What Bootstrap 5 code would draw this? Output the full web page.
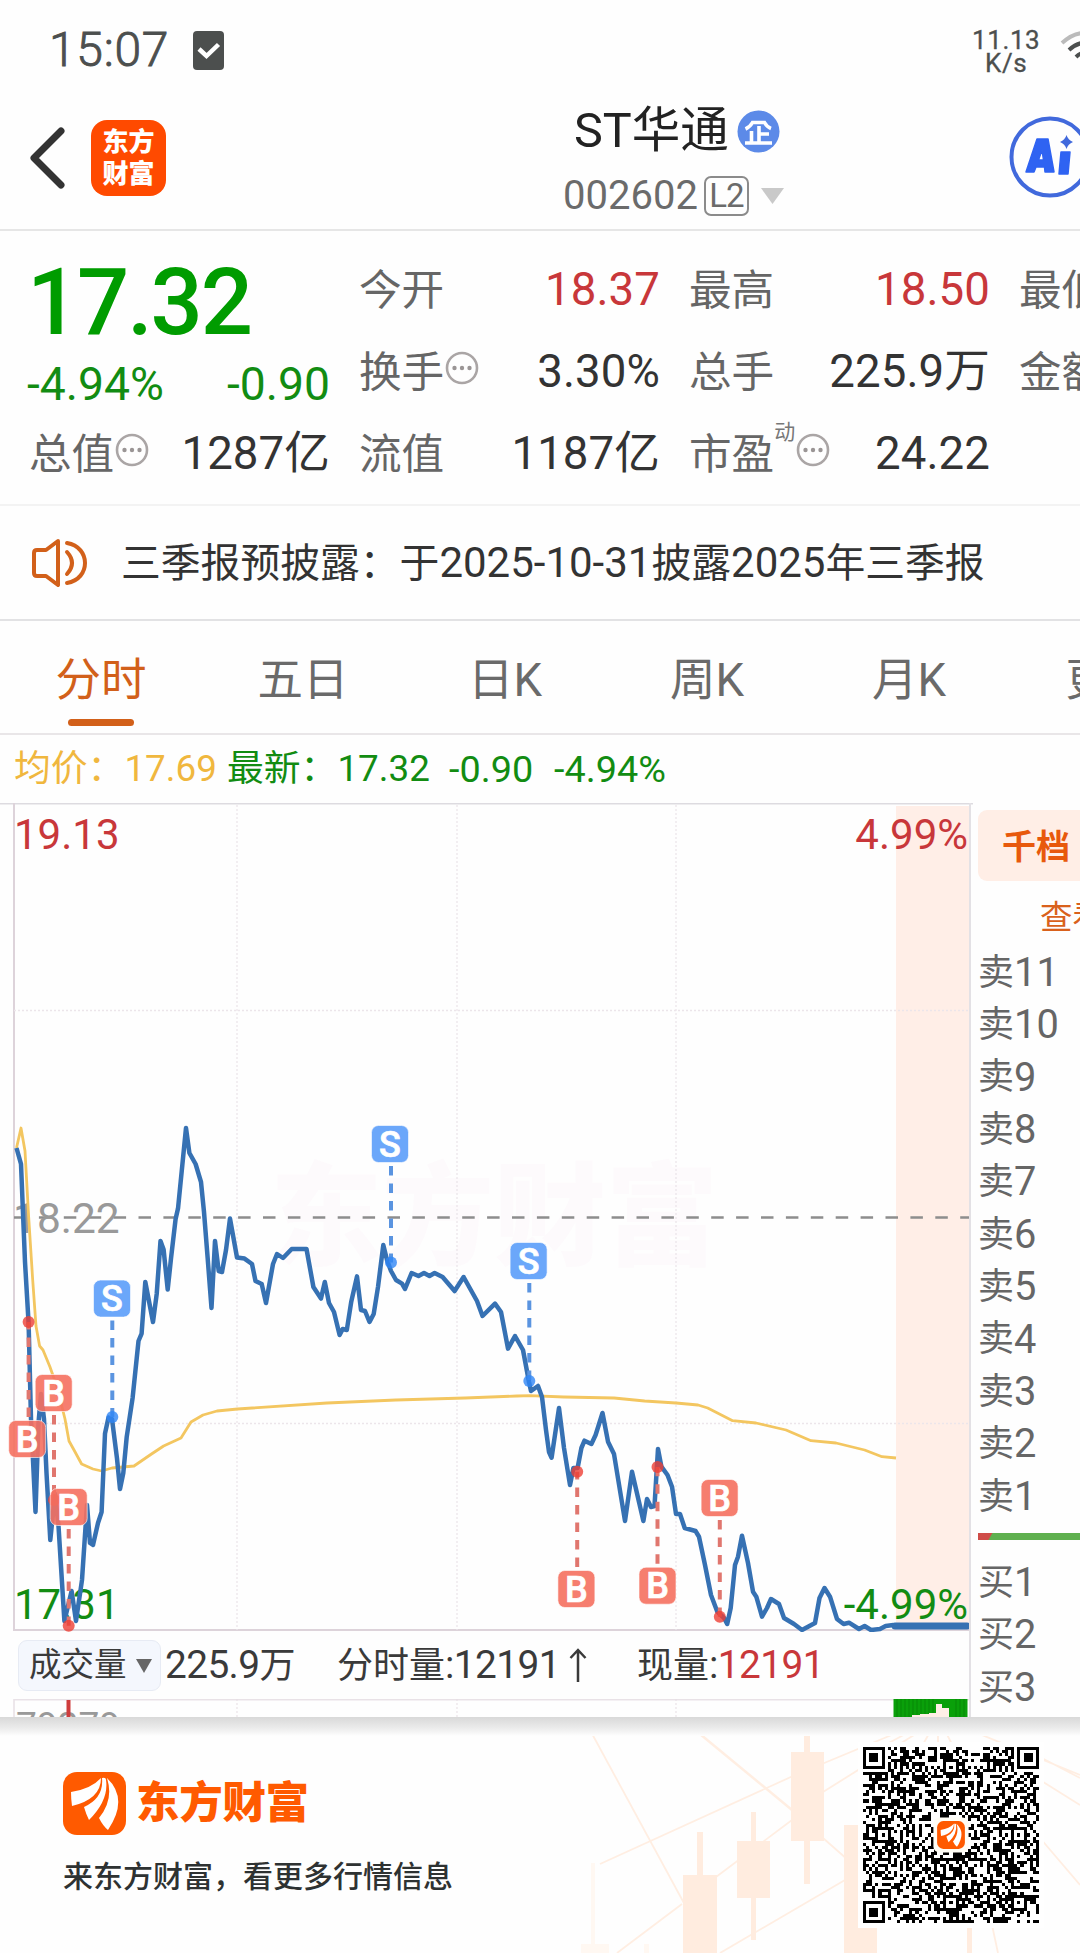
<!DOCTYPE html>
<html lang="zh-CN">
<head>
<meta charset="utf-8">
<meta name="viewport" content="width=device-width, initial-scale=1">
<title>ST华通 002602</title>
<link rel="stylesheet" href="https://cdn.jsdelivr.net/npm/bootstrap@5.3.0/dist/css/bootstrap.min.css">
<style>
body{width:1080px;height:1953px;overflow:hidden;background:#fefefe;color:#333;font-family:Roboto,"Noto Sans CJK SC",sans-serif;line-height:1;white-space:nowrap}
svg{display:block;flex:none}
.statusbar{height:100px;padding:0 0 20px 49px;color:#4c4f4e}
.clock{font-size:48px;font-weight:300;-webkit-text-stroke:.9px #4c4f4e;letter-spacing:.7px;width:121px;flex:none;margin-top:19px}
.netspeed{font-size:26px;line-height:23.5px;text-align:center;letter-spacing:.6px;color:#4c4f4e;-webkit-text-stroke:.3px #4c4f4e}
.titlebar{height:131px;border-bottom:2px solid #e6e6e6;padding-left:28px}
.applogo{width:75px;flex:none;height:76px;border-radius:16px;background:#ff4a00;color:#fff;font-size:26px;font-weight:900;line-height:32px;margin-left:25px;margin-top:-14px}
.titlecol{margin-left:397px;width:240px;flex:none}
.stockname{font-size:48.5px;color:#222;height:60px}
.codeline{font-size:40px;color:#6b6b6b;height:44px;margin-top:12px}
.l2{border:2px solid #8b8b8b;border-radius:7px;width:45px;height:40px;font-size:33px;margin-left:6px;letter-spacing:-1px}
.quotes{height:275px;border-bottom:2px solid #f3f3f3;padding:18px 30px 0 29px;gap:29px}
.qcol{width:301px;flex:none}
.qrow{height:82px;font-size:45.6px;letter-spacing:.1px}
.qlabel{font-size:42.6px;color:#666;letter-spacing:0}
.up{color:#c8373a}.down{color:#128c12}
.bigprice{font-size:92px;font-weight:500;color:#009c00;height:104px;line-height:108px;letter-spacing:-2.2px;margin-left:-2px}
.chg{height:60px;font-size:46.3px;margin-left:-2px;padding-top:3px}
.tiny{font-size:21px;color:#777;align-self:flex-start;margin-top:9px}
.notice{height:115px;border-bottom:2px solid #e2e2e4;padding-left:31px;font-size:39.8px;color:#333}
.notice b{font-weight:400;font-size:42px}
.tabrow{height:114px;border-bottom:2px solid #e9e6e8}
.tabrow .tabitem{width:202px;flex:none;font-size:45.5px;color:#6a6a6a;padding-top:37px;height:112px}
.tabitem.on{color:#d2601a}
.tabitem.on::after{content:"";width:66px;height:7px;border-radius:4px;background:#d2601a;margin-top:15px}
.legendrow{height:68px;padding:1px 0 0 14px;font-size:36.8px}
.legendrow .chgnum{font-size:37.8px}
.avg{color:#f0b73e}
.market{height:914px}
.pane{width:973px;flex:none}
.book{border-left:2px solid #e3e1e5;margin-left:-4px;padding:7px 0 0 7px;color:#666;font-size:36px;width:111px;flex:none;overflow:hidden}
.book .lv{height:52.4px}.lv i{font-style:normal;font-size:39.8px}
.depthbtn{width:110px;height:71px;border-radius:9px 0 0 9px;background:#ffeee6;color:#e8590c;font-weight:700;font-size:34px;padding:2px 0 0 24px}
.viewmore{font-size:32.5px;color:#d9611c;padding:21px 0 12px 62px}
.bidbar{height:7px;margin:10px 0 17px;background:linear-gradient(120deg,#cf4c48 12px,#5fb04f 13px)}
.volrow{height:67px;padding-left:18px;font-size:38.8px;letter-spacing:-.6px;color:#3a3a3a}
.volbtn{width:143px;height:51px;border-radius:9px;background:#f4f7fd;border:1px solid #e7ebf4;padding-left:10px;font-size:32.5px;letter-spacing:0}
.volrow .cj{font-size:36px;letter-spacing:0}
.promo{height:236px;position:relative;background:#fefefe}
.promo .art{position:absolute;left:0;top:0}
.shade{position:absolute;left:0;top:0;width:100%;height:19px;background:linear-gradient(#d8d8d8,#ececec 60%,#fefefe)}
.promobody{position:relative;height:236px;padding-left:63px}
.brand{font-size:43.5px;font-weight:900;color:#ff5a00;margin-left:10px;letter-spacing:-.3px}
.tagline{font-size:30px;font-weight:500;color:#2e3232;margin-top:27px}
.qrbox{width:186px;height:186px;background:#fff;margin:25px 36px 0 0;padding:5px;align-self:flex-start}
text{font-family:Roboto,"Noto Sans CJK SC",sans-serif}
</style>
</head>
<body>
<svg width="0" height="0" class="position-absolute">
<defs>
<symbol id="more" viewBox="0 0 34 34"><circle cx="17" cy="17" r="15" fill="none" stroke="#aaa5a5" stroke-width="2.6"/><g fill="#9a9595"><circle cx="9.5" cy="17" r="2.2"/><circle cx="17" cy="17" r="2.2"/><circle cx="24.5" cy="17" r="2.2"/></g></symbol>
<symbol id="fan" viewBox="0 0 63 63"><rect width="63" height="63" rx="14" fill="#ff5a00"/><g fill="#fff"><path d="M8 20Q28 17 38 6Q38 27 9 34Q8 27 8 20Z"/><path d="M39 6Q43 5 43 8Q46 28 26 48Q23 42 21 35Q41 26 39 6Z"/><path d="M44 6Q66 27 45 58Q40 54 36 46Q51 28 44 6Z"/></g></symbol>
</defs>
</svg>

<div class="statusbar d-flex align-items-center overflow-hidden">
  <div class="clock">15:07</div>
  <svg width="32" height="39" viewBox="0 0 32 39" style="margin-left:23px;margin-top:20px"><rect width="31" height="39" rx="4" fill="#4c4f4e"/><path d="M6 18L13.500 25L25.500 13.500" fill="none" stroke="#fff" stroke-width="4.500"/></svg>
  <div class="netspeed" style="margin-left:747px;margin-top:24px">11.13<br>K/s</div>
  <svg width="50" height="40" viewBox="0 0 50 40" style="margin-left:19px;margin-top:20px" fill="none" stroke-width="4"><path d="M3 13Q25 -7 47 13" stroke="#bbb"/><path d="M10 20Q25 6 40 20M17 27Q25 19 33 27" stroke="#4c4f4e"/></svg>
</div>

<div class="titlebar d-flex align-items-center overflow-hidden">
  <svg width="38" height="66" viewBox="0 0 38 66" style="margin-top:-14px"><path d="M33 6L6 33L33 60" fill="none" stroke="#333" stroke-width="7" stroke-linecap="round" stroke-linejoin="round"/></svg>
  <div class="applogo d-flex flex-column align-items-center justify-content-center"><span>东方</span><span>财富</span></div>
  <div class="titlecol" style="margin-top:-10px">
    <div class="stockname d-flex align-items-center" style="padding-left:11px">ST华通
      <svg width="43" height="43" viewBox="0 0 43 43" style="margin-left:8px"><circle cx="21.500" cy="21.500" r="21" fill="#5c8ae8"/><path d="M8.500 19Q13 17 15.500 12.500H27.500Q30 17 34 18.500M22 16V32M14.500 21V32M8 33H35M22 24H32" fill="none" stroke="#fff" stroke-width="3.600"/></svg>
    </div>
    <div class="codeline d-flex align-items-center"><span>002602</span><span class="l2 d-flex align-items-center justify-content-center">L2</span>
      <svg width="23" height="16" viewBox="0 0 23 16" style="margin-left:12px"><path d="M0 0H23L11.500 16Z" fill="#c9c9c9"/></svg></div>
  </div>
  <svg width="82" height="82" viewBox="0 0 82 82" style="margin-left:206px;margin-top:-16px"><circle cx="41" cy="41" r="38.500" fill="none" stroke="#4169dc" stroke-width="4"/><path fill-rule="evenodd" fill="#2f63f2" stroke="#2f63f2" stroke-width="1.500" stroke-linejoin="round" d="M17 56L28 23H39L45 56H36L35.500 51H27L25 56ZM29.500 44H34.500L33 34ZM52 36H61L59 58H50Z"/><path fill="#4169dc" d="M57.500 19Q59 24 64 26Q59 28 57.500 33Q56 28 51 26Q56 24 57.500 19Z"/></svg>
</div>

<div class="quotes d-flex overflow-hidden">
  <div class="qcol">
    <div class="bigprice">17.32</div>
    <div class="chg down d-flex justify-content-between align-items-center"><span>-4.94%</span><span>-0.90</span></div>
    <div class="qrow d-flex align-items-center"><span class="qlabel">总值</span><svg width="34" height="34" style="margin:-8px 0 0 1px"><use href="#more"/></svg><span class="ms-auto">1287亿</span></div>
  </div>
  <div class="qcol">
    <div class="qrow d-flex align-items-center"><span class="qlabel">今开</span><span class="ms-auto up">18.37</span></div>
    <div class="qrow d-flex align-items-center"><span class="qlabel">换手</span><svg width="34" height="34" style="margin:-8px 0 0 1px"><use href="#more"/></svg><span class="ms-auto">3.30%</span></div>
    <div class="qrow d-flex align-items-center"><span class="qlabel">流值</span><span class="ms-auto">1187亿</span></div>
  </div>
  <div class="qcol">
    <div class="qrow d-flex align-items-center"><span class="qlabel">最高</span><span class="ms-auto up">18.50</span></div>
    <div class="qrow d-flex align-items-center"><span class="qlabel">总手</span><span class="ms-auto">225.9万</span></div>
    <div class="qrow d-flex align-items-center"><span class="qlabel">市盈</span><span class="tiny">动</span><svg width="34" height="34" style="margin:-8px 0 0 1px"><use href="#more"/></svg><span class="ms-auto">24.22</span></div>
  </div>
  <div class="qcol">
    <div class="qrow d-flex align-items-center"><span class="qlabel">最低</span></div>
    <div class="qrow d-flex align-items-center"><span class="qlabel">金额</span></div>
  </div>
</div>

<div class="notice d-flex align-items-center">
  <svg width="60" height="52" viewBox="0 0 60 52" fill="none" stroke="#d2601a" stroke-width="4" stroke-linejoin="round" stroke-linecap="round"><path d="M27 4L15 13H6Q3 13 3 16V36Q3 39 6 39H15L27 48Z"/><path d="M36 15Q46 26 36 37M36 6C60 10 60 42 36 46"/></svg>
  <span style="margin-left:30px;padding-top:1px">三季报预披露：于<b>2025-10-31</b>披露<b>2025</b>年三季报</span>
</div>

<div class="tabrow d-flex overflow-hidden">
  <div class="tabitem on d-flex flex-column align-items-center">分时</div>
  <div class="tabitem text-center">五日</div>
  <div class="tabitem text-center">日K</div>
  <div class="tabitem text-center">周K</div>
  <div class="tabitem text-center">月K</div>
  <div class="tabitem text-center">更多</div>
</div>

<div class="legendrow d-flex align-items-center">
  <span class="avg" style="width:213px">均价：17.69</span><span class="down" style="width:222px">最新：17.32</span><span class="down chgnum" style="width:105px">-0.90</span><span class="down chgnum">-4.94%</span>
</div>

<div class="market d-flex overflow-hidden">
  <div class="pane">
    <svg width="973" height="829" viewBox="0 803 973 829" id="chart">
      <rect x="896" y="806" width="73" height="823" fill="#ffeee7"/>
      <text x="270" y="1257" font-size="112" font-weight="900" fill="#fdfafc">东方财富</text>
      <path d="M0 803.500H973" stroke="#dddbe0" stroke-width="2"/>
      <path d="M14 803V1630H971" fill="none" stroke="#ddd3da" stroke-width="2"/>
      <path d="M237 805V1630M457 805V1630M676 805V1630M14 1010.500H969M14 1423.500H969" stroke="#ece5ea" stroke-width="1.300" stroke-dasharray="2 2"/>
      <path d="M14 1217.500H969" stroke="#8d8d8d" stroke-width="2.300" stroke-dasharray="12.500 12.400"/>
      <text x="13" y="1233" font-size="42.500" fill="#999">18.22</text>
      <text x="14" y="849" font-size="42" fill="#c8373a">19.13</text>
      <text x="968" y="849" font-size="42" fill="#c8373a" text-anchor="end">4.99%</text>
      <text x="14" y="1619" font-size="42" fill="#128c12">17.31</text>
      <polyline fill="none" stroke="#f3c660" stroke-width="2.800" stroke-linejoin="round" points="16.500,1148 21,1128 25,1151 28.600,1216 32.700,1280 36,1326 39.600,1346 43,1350 50,1367 57,1387 65,1419 69,1441 74,1450 81.600,1464 93,1469 101.600,1471 112,1468 134,1466 151.500,1454 163.600,1446 181,1438 191,1422 203,1415 217,1411 237.600,1409 327,1403 396,1400 465,1398 517,1396 530,1395.700 564,1397 614,1398 644.600,1401 676,1403 698,1405 707.700,1408 732.600,1420.700 756,1423 786,1430 811,1440.700 836,1443 864.600,1450 882,1456.700 896,1458"/>
      <polyline fill="none" stroke="#3671b3" stroke-width="4.500" stroke-linejoin="round" points="16.500,1148 21,1164 25,1262 28.600,1323 31,1419 35.500,1512 38.500,1423 41,1394 44,1419 46.500,1473 50.300,1540 55,1494 58.500,1526 64.400,1621 71.600,1591 76,1621 82,1580 87,1505 90,1543 93,1545 98,1523 101.600,1512 105,1433.500 108.500,1417.500 112,1419 117,1458.500 120,1489 123.300,1473 126.700,1437 132.600,1398 138.500,1341 141.600,1333.600 145.300,1282 153,1322 156.700,1294 160.500,1241 163.600,1249.600 167.700,1289.600 171,1258.600 175.600,1219 178,1208.600 186,1128 189.400,1153 195.600,1164 201,1182 204,1212 207.700,1258.600 211.500,1308 215,1241 218.700,1271 222,1272 226,1250 230,1218.600 237,1257.500 244.500,1258.600 252,1264 255.500,1281 261.700,1284 266,1303 273,1264 277,1254 283,1258 291.700,1249 306.500,1249 313.400,1287 321,1298.600 324.800,1282 329,1303 334,1312 339.600,1335 342.700,1329 346.800,1330 351.300,1301.400 357,1276.400 361,1310 365,1311 369.500,1322 373.700,1314 378,1287 383.300,1245 387,1260 391,1271 396,1280 402,1283.600 405,1289 411.600,1273 418.500,1276 424,1273 429.500,1276 434.600,1273 442.600,1277 454.600,1291 463.600,1277 477,1301 482.500,1316 495,1303.600 501,1312 508,1348.600 515,1336 523,1350 526,1366 529,1382 531,1391 538,1386 542,1397 546,1430 549,1452 551.600,1457.700 559,1408 564,1448 570,1485 573.400,1468 577.600,1468 581.400,1448 584.500,1440.700 591.400,1444 595.600,1435 602.500,1413 608,1441.700 614,1454 625,1521 632,1471.700 643.400,1521 647,1499 651,1507 654.500,1506 658,1449 661.400,1466.700 667.500,1475 672,1486.700 676,1514 680,1514 684.700,1528 695.500,1531 699,1536.700 705,1565 711,1595 717.300,1611.700 724,1618 727.200,1624 730.700,1608 735,1565 738,1556.700 742,1535.700 748,1563 753,1591.700 756.300,1596.700 762,1616.700 767,1608 771,1599 779,1604 784,1618 794,1624 802,1630 815,1623 819.500,1598 824.500,1588 830,1596.700 837,1619 843.600,1624 849,1622.700 859,1629 864.600,1626 871,1630 880,1629 885.700,1626 893.400,1625"/>
      <path d="M895 1626H967" stroke="#3671b3" stroke-width="7" stroke-linecap="round"/>
      <text x="968" y="1619" font-size="42" fill="#128c12" text-anchor="end">-4.99%</text>
      <g id="marks"></g>
    </svg>
    <div class="volrow d-flex align-items-center">
      <span class="volbtn d-flex align-items-center">成交量<svg width="16" height="14" viewBox="0 0 16 14" style="margin-left:9px"><path d="M0 0H16L8 14Z" fill="#666"/></svg></span>
      <span style="margin-left:4px;width:172px">225.9<span class="cj">万</span></span>
      <span style="width:300px"><span class="cj">分时量</span>:12191<svg class="d-inline-block" width="18" height="36" viewBox="0 0 18 36" style="margin:-6px 0 0 9px"><path d="M9 35V3M1.500 11L9 3L16.500 11" fill="none" stroke="#3a3a3a" stroke-width="2.500"/></svg></span>
      <span><span class="cj">现量</span>:<span class="up">12191</span></span>
    </div>
    <svg width="973" height="18" viewBox="0 0 973 18">
      <path d="M14 18V.8H971" fill="none" stroke="#e9e2e7" stroke-width="1.600"/>
      <path d="M237 0V18M457 0V18M676 0V18" stroke="#e6dde3" stroke-dasharray="2 2"/>
      <text x="16" y="39" font-size="37" fill="#999">79279</text>
      <path d="M68.500 1V18" stroke="#cf3c3c" stroke-width="4"/>
      <rect x="893.500" y="0" width="74" height="18" fill="#0aa00a"/>
      <path d="M897 0V18M901 0V18M905 0V18M909 0V18M913 0V18M917 0V18M921 0V18M925 0V18M929 0V18M933 0V18M956 0V18M960 0V18M964 0V18" stroke="#078807" stroke-width="1"/>
      <path d="M912 18V16H920V15H929V14H936V5H942V9H949V18Z" fill="#ffeee7"/>
    </svg>
  </div>
  <div class="book">
    <div class="depthbtn d-flex align-items-center">千档</div>
    <div class="viewmore">查看</div>
    <div id="asks"></div>
    <div class="bidbar"></div>
    <div id="bids"></div>
  </div>
</div>

<div class="promo">
  <svg class="art" width="1080" height="236" viewBox="0 1717 1080 236">
    <g stroke="#ffeee2" stroke-width="1.800" fill="none"><path d="M683 1720L792 1810" stroke-width="2.500"/><path d="M590 1730L685 1905M600 1864L793 1776L935 1717M823 1792L938 1720M716 1877L792 1820M617 1953L682 1904M720 1953L845 1880M823 1838L848 1860M937 1717L885 1745M938 1717L920 1750M938 1717V1750M938 1717L955 1750M938 1717L1080 1775M1038 1756L1080 1778M1040 1780L1080 1805M1040 1838L1080 1885M992 1925L998 1953"/></g>
    <g fill="#ffecdf"><rect x="683" y="1875" width="34" height="78"/><rect x="697" y="1832" width="6" height="43"/><rect x="737" y="1841" width="33" height="57"/><rect x="751" y="1812" width="5" height="128"/><rect x="791" y="1752" width="33" height="89"/><rect x="804" y="1728" width="6" height="156"/><rect x="844" y="1825" width="33" height="128"/><rect x="967" y="1925" width="5" height="28"/></g>
    <g fill="#fff8f2"><rect x="591" y="1863" width="4" height="90"/><rect x="581" y="1944" width="28" height="9"/><rect x="644" y="1944" width="5" height="9"/></g>
  </svg>
  <div class="shade"></div>
  <div class="promobody d-flex justify-content-between">
    <div style="padding-top:55px">
      <div class="d-flex align-items-center"><svg width="63" height="63"><use href="#fan"/></svg><span class="brand">东方财富</span></div>
      <div class="tagline">来东方财富，看更多行情信息</div>
    </div>
    <div class="qrbox"><svg id="qr" width="176" height="176" viewBox="0 0 57 57"></svg></div>
  </div>
</div>

<script>
// Order book levels
const level = (side, n) => `<div class="lv d-flex align-items-center">${side}<i>${n}</i></div>`;
let a = '', b = '';
for (let n = 11; n > 0; n--) a += level('卖', n);
for (let n = 1; n < 4; n++) b += level('买', n);
document.getElementById('asks').innerHTML = a;
document.getElementById('bids').innerHTML = b;

// Trade markers: letter, label x/y, execution point x/y
const trades = [['B',53.7,1393,54,1500],['B',27.2,1439,28.6,1322],['B',68.7,1507,68.7,1625.7],['S',112,1298.6,112.3,1417],
 ['S',390,1144,391,1262.5],['S',528.6,1261,529.3,1381],['B',576.4,1589,577.2,1471.7],['B',657.5,1585.7,657.5,1467],['B',719.6,1498,719.8,1616.7]];
document.getElementById('marks').innerHTML = trades.map(([k,x,y,px,py]) => {
  const buy = k === 'B', down = py > y;
  const y1 = down ? y + 22 : y - 22;
  return `<path d="M${px} ${y1}V${py}" stroke="${buy ? '#e0766e' : '#5a94e0'}" stroke-width="4" stroke-dasharray="9.500 8"/>
   <circle cx="${px}" cy="${py}" r="6" fill="${buy ? '#ee3f35' : '#2f86f5'}" fill-opacity=".8"/>
   <rect x="${x-18.5}" y="${y-18.5}" width="37" height="37" rx="7" fill="${buy ? '#f5705f' : '#5b9dfa'}" fill-opacity=".9" stroke="#fff" stroke-opacity=".6"/>
   <text x="${x}" y="${y+12.5}" font-size="36" font-weight="500" fill="#fff" stroke="#fff" stroke-width=".7" text-anchor="middle">${k}</text>`;
}).join('');

// QR symbol, 57 modules a side
const N = 57, m = [];
let seed = 20251031;
const rnd = () => {
  seed = (seed + 0x6D2B79F5) | 0;
  let t = Math.imul(seed ^ (seed >>> 15), 1 | seed);
  t = (t + Math.imul(t ^ (t >>> 7), 61 | t)) ^ t;
  return ((t ^ (t >>> 14)) >>> 0) / 4294967296;
};
for (let r = 0; r < N; r++) { m.push([]); for (let c = 0; c < N; c++) m[r].push(rnd() < .5); }
const ring = (r0, c0, rad, on) => {
  for (let r = -rad; r <= rad; r++) for (let c = -rad; c <= rad; c++) {
    const R = r0 + r, C = c0 + c;
    if (R >= 0 && C >= 0 && R < N && C < N) m[R][C] = on(Math.max(Math.abs(r), Math.abs(c)));
  }
};
for (let i = 8; i < N - 8; i++) m[6][i] = m[i][6] = i % 2 === 0;
[[3,3],[3,53],[53,3]].forEach(p => ring(p[0], p[1], 4, d => d !== 4 && d !== 2));
[[6,28],[28,6],[28,50],[50,28],[50,50]].forEach(p => ring(p[0], p[1], 2, d => d !== 1));
let d = '';
m.forEach((row, r) => row.forEach((v, c) => { if (v) d += `M${c} ${r}h1v1h-1z`; }));
document.getElementById('qr').innerHTML = `<path d="${d}" fill="#000" shape-rendering="crispEdges"/>
 <rect x="22.800" y="22.800" width="11.400" height="11.400" rx="2" fill="#fffdf5"/><svg x="24" y="24" width="9" height="9"><use href="#fan"/></svg>`;
</script>
<script src="https://cdn.jsdelivr.net/npm/bootstrap@5.3.0/dist/js/bootstrap.bundle.min.js"></script>
</body>
</html>
